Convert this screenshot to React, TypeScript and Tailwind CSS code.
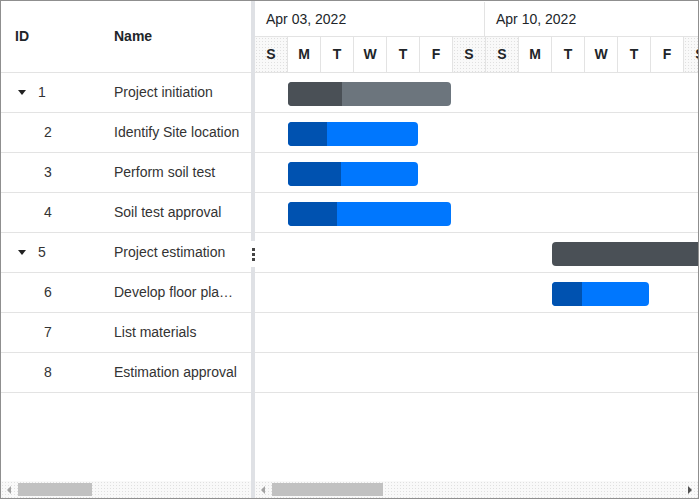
import React from "react";

type Task = {
  id: number;
  name: string;
  parent?: boolean;
  start?: number;
  days?: number;
  progress?: number;
};

const tasks: Task[] = [
  { id: 1, name: "Project initiation", parent: true, start: 1, days: 5, progress: 33 },
  { id: 2, name: "Identify Site location", start: 1, days: 4, progress: 30 },
  { id: 3, name: "Perform soil test", start: 1, days: 4, progress: 41 },
  { id: 4, name: "Soil test approval", start: 1, days: 5, progress: 30 },
  { id: 5, name: "Project estimation", parent: true, start: 9, days: 6, progress: 100 },
  { id: 6, name: "Develop floor plan for estimation", start: 9, days: 3, progress: 31 },
  { id: 7, name: "List materials" },
  { id: 8, name: "Estimation approval" },
];

const DAY = 33;
const days = ["S", "M", "T", "W", "T", "F", "S", "S", "M", "T", "W", "T", "F", "S"];
const stipple =
  "bg-[#f9f9f9] bg-[radial-gradient(#e0e0e0_0.6px,transparent_0.8px)] bg-[size:3px_3px]";

const Caret = () => (
  <span className="inline-block w-0 h-0 border-l-[4px] border-r-[4px] border-t-[5px] border-l-transparent border-r-transparent border-t-[#222]" />
);

const ScrollBar = ({ thumbLeft, thumbWidth, right }: { thumbLeft: number; thumbWidth: number; right?: boolean }) => (
  <div className={`relative h-[17px] shrink-0 ${stipple}`}>
    <span className="absolute left-[6px] top-[5px] w-0 h-0 border-t-[4px] border-b-[4px] border-r-[4px] border-t-transparent border-b-transparent border-r-[#a3a3a3]" />
    <div
      className="absolute top-[2px] h-[13px] bg-[#c1c1c1]"
      style={{ left: thumbLeft, width: thumbWidth }}
    />
    {right && (
      <span className="absolute right-[6px] top-[5px] w-0 h-0 border-t-[4px] border-b-[4px] border-l-[4px] border-t-transparent border-b-transparent border-l-[#505050]" />
    )}
  </div>
);

export default function App() {
  return (
    <div
      className="w-[699px] h-[499px] border border-[#8f8f8f] bg-white flex overflow-hidden text-[14px] text-[#333]"
      style={{ fontFamily: '"Liberation Sans", Arial, sans-serif' }}
    >
      {/* grid pane */}
      <div className="w-[250px] shrink-0 flex flex-col">
        <div className="h-[72px] border-b border-[#e3e3e3] flex items-center font-bold text-[#212529]">
          <div className="w-[100px] pl-[14px]">ID</div>
          <div className="pl-[13px]">Name</div>
        </div>
        {tasks.map((t) => (
          <div key={t.id} className="h-10 border-b border-[#e3e3e3] flex items-center">
            <div className="w-[100px] shrink-0 flex items-center">
              {t.parent ? (
                <>
                  <span className="ml-[17px] mr-[12px] flex">
                    <Caret />
                  </span>
                  <span>{t.id}</span>
                </>
              ) : (
                <span className="ml-[43px]">{t.id}</span>
              )}
            </div>
            <div className="w-[150px] pl-[13px] pr-[11px] truncate">{t.name}</div>
          </div>
        ))}
        <div className="flex-1" />
        <ScrollBar thumbLeft={17} thumbWidth={74} />
      </div>

      {/* splitter */}
      <div className="w-[4px] shrink-0 bg-[#dfe1e5] relative">
        <div className="absolute left-0 top-[240px] w-[4px] h-[26px] bg-white flex flex-col items-center justify-center gap-[2px]">
          <span className="w-[3px] h-[3px] bg-[#444]" />
          <span className="w-[3px] h-[3px] bg-[#444]" />
          <span className="w-[3px] h-[3px] bg-[#444]" />
        </div>
      </div>

      {/* chart pane */}
      <div className="flex-1 min-w-0 flex flex-col overflow-hidden">
        <div className="h-[72px] shrink-0 border-b border-[#e3e3e3] flex flex-col">
          <div className="h-[36px] border-b border-[#e3e3e3] flex text-[#212529] pt-[1px]">
            <div className="w-[230px] shrink-0 border-r border-[#e3e3e3] pl-[11px] flex items-center">Apr 03, 2022</div>
            <div className="w-[231px] shrink-0 pl-[11px] flex items-center">Apr 10, 2022</div>
          </div>
          <div className="flex-1 flex font-bold text-[#212529]">
            {days.map((d, i) => (
              <div
                key={i}
                className={`w-[33px] shrink-0 border-r border-[#e3e3e3] flex items-center justify-center ${
                  d === "S" ? stipple : ""
                }`}
              >
                {d}
              </div>
            ))}
          </div>
        </div>
        {tasks.map((t) => (
          <div key={t.id} className="h-10 shrink-0 border-b border-[#e3e3e3] pt-[9px] flex">
            {t.days && (
              <div
                className={`h-[24px] shrink-0 rounded-[4px] overflow-hidden flex ${
                  t.parent ? "bg-[#6c757d]" : "bg-[#0077fe]"
                }`}
                style={{ marginLeft: (t.start ?? 0) * DAY, width: t.days * DAY - 2 }}
              >
                <div
                  className={t.parent ? "bg-[#4a5056]" : "bg-[#0052b0]"}
                  style={{ width: `${t.progress}%` }}
                />
              </div>
            )}
          </div>
        ))}
        <div className="flex-1" />
        <ScrollBar thumbLeft={17} thumbWidth={111} right />
      </div>
    </div>
  );
}
